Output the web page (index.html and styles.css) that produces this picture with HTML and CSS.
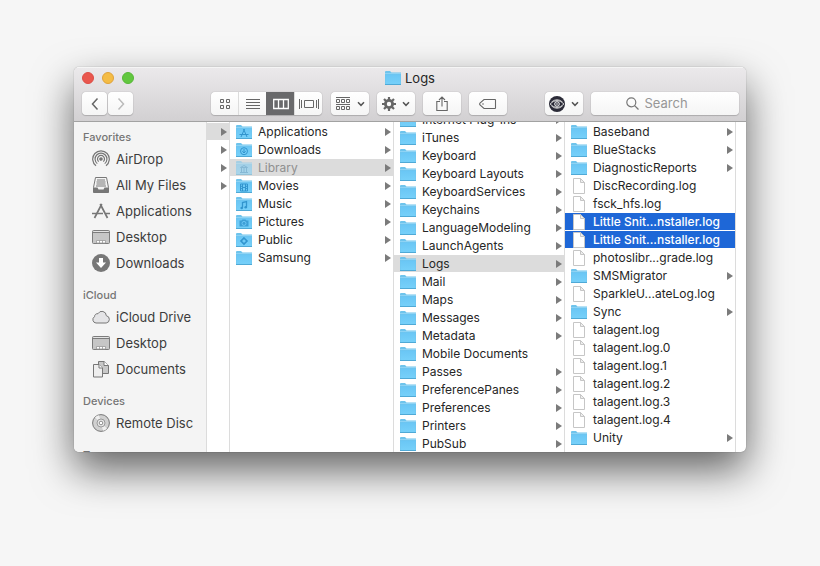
FILE: index.html
```html
<!DOCTYPE html>
<html lang="en">
<head>
<meta charset="utf-8">
<title>Logs</title>
<link rel="stylesheet" href="styles.css">
</head>
<body>
<svg class="defs" aria-hidden="true">
  <defs>
    <linearGradient id="blue" x1="0" y1="0" x2="0" y2="1"><stop offset="0" stop-color="#6ac6f5"/><stop offset="1" stop-color="#76d0f9"/></linearGradient>
    <symbol id="folder" viewBox="0 0 16 14">
      <path d="M0 1Q0 0 1 0H5L6.500 1.500H16V14H0Z" fill="#6fc4ec"/>
      <path d="M0 2.500H16" stroke="#8fd3f4"/>
      <path d="M.5 3.500H15.500V13H.5Z" fill="url(#blue)"/>
      <path d="M0 13.500H16" stroke="#4fa9d6"/>
    </symbol>
    <symbol id="file" viewBox="0 0 14 16">
      <path d="M1.500.5H8.500L12.500 4.500V15.500H1.500Z" fill="#fff" stroke="#c6c6c6"/>
      <path d="M8.500.5V4.500H12.500Z" fill="#eee" stroke="#c6c6c6"/>
    </symbol>
    <symbol id="chev" viewBox="0 0 8 6"><path d="M1 1.200L4 4.300L7 1.200" fill="none" stroke="#555" stroke-width="1.500"/></symbol>
    <symbol id="desktop" viewBox="0 0 18 18">
      <rect x=".5" y="2.500" width="17" height="13" rx="1" fill="#c6c6c6" stroke="#7c7c7c"/>
      <path d="M1 4.500H17" stroke="#7c7c7c"/><path d="M1.500 3.500H16.500" stroke="#e4e4e4"/>
      <path d="M4.500 15V12.500H13.500V15Z" fill="#fff" stroke="#999" stroke-width=".8"/><path d="M7.500 12.500V15M10.500 12.500V15" stroke="#999" stroke-width=".8"/>
    </symbol>
  </defs>
</svg>
<main class="window">
  <header class="titlebar">
    <div class="caption">
      <div class="lights">
        <button class="light close" aria-label="Close"></button>
        <button class="light minimize" aria-label="Minimize"></button>
        <button class="light zoom" aria-label="Zoom"></button>
      </div>
      <h1 class="title"><svg class="folder"><use href="#folder"/></svg>Logs</h1>
    </div>
    <div class="toolbar">
      <div class="history">
        <button class="tool nav" aria-label="Back"><svg width="8" height="14" viewBox="0 0 8 14"><path d="M6.500 1.500L1.500 7L6.500 12.500" fill="none" stroke="#666" stroke-width="1.500"/></svg></button>
        <button class="tool nav" aria-label="Forward" disabled><svg width="8" height="14" viewBox="0 0 8 14"><path d="M1.500 1.500L6.500 7L1.500 12.500" fill="none" stroke="#bbb" stroke-width="1.500"/></svg></button>
      </div>
      <div class="views">
        <button class="view" aria-label="Icons"><svg width="12" height="12" viewBox="0 0 12 12" fill="none" stroke="#666"><path d="M1.500 1.500h3v3h-3zM7.500 1.500h3v3h-3zM1.500 7.500h3v3h-3zM7.500 7.500h3v3h-3z"/></svg></button>
        <button class="view" aria-label="List"><svg width="14" height="12" viewBox="0 0 14 12"><path d="M0 1.500H14M0 4.500H14M0 7.500H14M0 10.500H14" stroke="#666"/></svg></button>
        <button class="view selected" aria-label="Columns" aria-pressed="true"><svg width="16" height="12" viewBox="0 0 16 12"><path d="M.7 1.500H15.300V10.500H.7ZM5.500 1.500V10.500M10.500 1.500V10.500" fill="none" stroke="#fff" stroke-width="1.300"/></svg></button>
        <button class="view" aria-label="Cover Flow"><svg width="20" height="12" viewBox="0 0 20 12"><path d="M.5 1V11M2.500 2V10M17.500 2V10M19.500 1V11M5.500 2.500H14.500V9.500H5.500Z" fill="none" stroke="#666"/></svg></button>
      </div>
      <div class="actions">
        <button class="tool" aria-label="Arrange"><svg width="15" height="14" viewBox="0 0 15 14" fill="none" stroke="#666"><path d="M0 .5H14M0 7.500H14M.5 2.500h3v3h-3zM5.500 2.500h3v3h-3zM10.500 2.500h3v3h-3zM.5 9.500h3v3h-3zM5.500 9.500h3v3h-3zM10.500 9.500h3v3h-3z"/></svg><svg class="chev"><use href="#chev"/></svg></button>
        <button class="tool" aria-label="Action"><svg width="14" height="14" viewBox="-7 -7 14 14"><circle r="3.600" fill="none" stroke="#666" stroke-width="2.800"/><path d="M0-7V-4M0 4V7M-7 0H-4M4 0H7M-5-5L-3-3M3 3L5 5M-5 5L-3 3M3-3L5-5" stroke="#666" stroke-width="2.200"/></svg><svg class="chev"><use href="#chev"/></svg></button>
        <button class="tool" aria-label="Share"><svg width="12" height="16" viewBox="0 0 12 16"><path d="M4 5.500H.8V14.500H11.200V5.500H8M6 10.500V1M3 4L6 1L9 4" fill="none" stroke="#666" stroke-width="1.100"/></svg></button>
        <button class="tool" aria-label="Tags"><svg width="18" height="12" viewBox="0 0 18 12"><path d="M5 1.500H16Q16.500 1.500 16.500 2V10Q16.500 10.500 16 10.500H5L1 7Q.3 6 1 5Z" fill="none" stroke="#666" stroke-width="1.100"/><circle cx="4" cy="6" r=".8" fill="#666"/></svg></button>
      </div>
      <button class="tool eye" aria-label="Quick actions"><svg width="16" height="16" viewBox="0 0 16 16"><circle cx="8" cy="8" r="8" fill="#2b2b38"/><path d="M1 8Q8 1 15 8Q8 15 1 8ZM2.500 6Q8 1.500 13.500 6M2.500 10Q8 14.500 13.500 10" fill="none" stroke="#ddd" stroke-width=".9"/><circle cx="8" cy="8" r="2.300" fill="none" stroke="#fff"/><circle cx="8" cy="8" r=".8" fill="#fff"/></svg><svg class="chev"><use href="#chev"/></svg></button>
      <label class="search"><svg width="13" height="13" viewBox="0 0 13 13"><circle cx="5.300" cy="5.300" r="4.500" fill="none" stroke="#777" stroke-width="1.200"/><path d="M8.600 8.600L12.500 12.500" stroke="#777" stroke-width="1.300"/></svg><input type="text" placeholder="Search" aria-label="Search"></label>
    </div>
  </header>
  <div class="browser">
    <nav class="sidebar">
      <h2>Favorites</h2>
      <a href="#"><svg viewBox="0 0 18 18" fill="none" stroke="#777" stroke-width="1.200"><path d="M4 15.700A8.300 8.300 0 1 1 14 15.700M5.300 13.600A5.900 5.900 0 1 1 12.700 13.600M6.700 11.600A3.500 3.500 0 1 1 11.300 11.600"/><circle cx="9" cy="9" r="1.200" fill="#777"/></svg>AirDrop</a>
      <a href="#"><svg viewBox="0 0 18 18"><path d="M3.500 1.500H14.500L16.500 11.500V16.500H1.500V11.500Z" fill="#f4f4f4" stroke="#777"/><path d="M1.500 11.500H5.500L6.500 13.500H11.500L12.500 11.500H16.500V16.500H1.500Z" fill="#777"/><path d="M5 4H13M4.500 6H13.500M4.500 8H13.500M4 10H14" stroke="#777"/></svg>All My Files</a>
      <a href="#"><svg viewBox="0 0 18 18" fill="none" stroke="#777" stroke-width="1.700"><path d="M9.800 2L2.500 16M8.200 2L15.500 16"/><path d="M0 11.500H11M14 11.500H18" stroke-width="1.500"/></svg>Applications</a>
      <a href="#"><svg><use href="#desktop"/></svg>Desktop</a>
      <a href="#"><svg viewBox="0 0 18 18"><circle cx="9" cy="9" r="9" fill="#777"/><path d="M7 4H11V8.500H14L9 14L4 8.500H7Z" fill="#fff"/></svg>Downloads</a>
      <h2>iCloud</h2>
      <a href="#"><svg viewBox="0 0 18 18"><path d="M4 15A3.400 3.400 0 0 1 2.500 8.700A3 3 0 0 1 6 5.700A4.400 4.400 0 0 1 14.300 7.700A3.700 3.700 0 0 1 14.200 15Z" fill="#e4e4e6" stroke="#777"/></svg>iCloud Drive</a>
      <a href="#"><svg><use href="#desktop"/></svg>Desktop</a>
      <a href="#"><svg viewBox="0 0 18 18" stroke="#777"><path d="M6.500 1.500H12L16.500 5.500V13.500H6.500Z" fill="#c8c8c8"/><path d="M12 1.500V5.500H16.500" fill="#fff"/><path d="M1.500 4.500H7L10.500 8V17H1.500Z" fill="#eee"/><path d="M7 4.500V8H10.500" fill="#fff"/></svg>Documents</a>
      <h2>Devices</h2>
      <a href="#"><svg viewBox="0 0 18 18" fill="none"><circle cx="9" cy="9" r="8.400" fill="#d0d0d0" stroke="#777"/><path d="M9 9L3 3.500A8 8 0 0 1 7 1.300ZM9 9L15 14.500A8 8 0 0 1 11 16.700Z" fill="#f0f0f0"/><circle cx="9" cy="9" r="4" fill="#e8e8e8" stroke="#888" stroke-width=".8"/><circle cx="9" cy="9" r="1.800" fill="#fff" stroke="#777" stroke-width=".8"/></svg>Remote Disc</a>
      <h2>Tags</h2>
    </nav>
    <ul class="column parents">
      <li><button class="row more current" aria-label="Home"></button></li>
      <li><button class="row more" aria-label="Folder 2"></button></li>
      <li><button class="row more" aria-label="Folder 3"></button></li>
      <li><button class="row more" aria-label="Folder 4"></button></li>
    </ul>
    <ul class="column">
      <li><button class="row more"><svg class="folder" viewBox="0 0 16 14"><use href="#folder"/><path d="M8.500 4L5 12M7.500 4L11 12M3.500 9.500H12.500" fill="none" stroke="#3295ce"/></svg>Applications</button></li>
      <li><button class="row more"><svg class="folder" viewBox="0 0 16 14"><use href="#folder"/><circle cx="8" cy="8.200" r="3.500" fill="none" stroke="#3295ce"/><path d="M8 6V9.500M6.300 8.300L8 10L9.700 8.300" fill="none" stroke="#3295ce"/></svg>Downloads</button></li>
      <li><button class="row more current dimmed"><svg class="folder" viewBox="0 0 16 14"><use href="#folder"/><path d="M4.500 6.500L8 4.500L11.500 6.500ZM5.500 7V11M8 7V11M10.500 7V11M4 11.500H12" fill="none" stroke="#3295ce"/></svg>Library</button></li>
      <li><button class="row more"><svg class="folder" viewBox="0 0 16 14"><use href="#folder"/><path d="M4.500 5H11.500V12H4.500ZM6.500 5V12M9.500 5V12M4.500 7.300H6.500M4.500 9.600H6.500M9.500 7.300H11.500M9.500 9.600H11.500M6.500 8.500H9.500" fill="none" stroke="#3295ce"/></svg>Movies</button></li>
      <li><button class="row more"><svg class="folder" viewBox="0 0 16 14"><use href="#folder"/><path d="M6.500 11V5.500L10.500 4.500V10" fill="none" stroke="#3295ce" stroke-width="1.300"/><circle cx="5.700" cy="11" r="1.300" fill="#3295ce"/><circle cx="9.700" cy="10.200" r="1.300" fill="#3295ce"/></svg>Music</button></li>
      <li><button class="row more"><svg class="folder" viewBox="0 0 16 14"><use href="#folder"/><path d="M3.500 5.500H5.500L6.500 4.500H9.500L10.500 5.500H12.500V11.500H3.500Z" fill="#3d9fd6"/><circle cx="8" cy="8.400" r="2" fill="none" stroke="#70c8f5" stroke-width=".9"/></svg>Pictures</button></li>
      <li><button class="row more"><svg class="folder" viewBox="0 0 16 14"><use href="#folder"/><path d="M8 5L11 8L8 11L5 8Z" fill="none" stroke="#3295ce" stroke-width="1.600"/></svg>Public</button></li>
      <li><button class="row more"><svg class="folder"><use href="#folder"/></svg>Samsung</button></li>
    </ul>
    <ul class="column scrolled">
      <li><button class="row more"><svg class="folder"><use href="#folder"/></svg>Internet Plug-Ins</button></li>
      <li><button class="row more"><svg class="folder"><use href="#folder"/></svg>iTunes</button></li>
      <li><button class="row more"><svg class="folder"><use href="#folder"/></svg>Keyboard</button></li>
      <li><button class="row more"><svg class="folder"><use href="#folder"/></svg>Keyboard Layouts</button></li>
      <li><button class="row more"><svg class="folder"><use href="#folder"/></svg>KeyboardServices</button></li>
      <li><button class="row more"><svg class="folder"><use href="#folder"/></svg>Keychains</button></li>
      <li><button class="row more"><svg class="folder"><use href="#folder"/></svg>LanguageModeling</button></li>
      <li><button class="row more"><svg class="folder"><use href="#folder"/></svg>LaunchAgents</button></li>
      <li><button class="row more current"><svg class="folder"><use href="#folder"/></svg>Logs</button></li>
      <li><button class="row more"><svg class="folder"><use href="#folder"/></svg>Mail</button></li>
      <li><button class="row more"><svg class="folder"><use href="#folder"/></svg>Maps</button></li>
      <li><button class="row more"><svg class="folder"><use href="#folder"/></svg>Messages</button></li>
      <li><button class="row more"><svg class="folder"><use href="#folder"/></svg>Metadata</button></li>
      <li><button class="row"><svg class="folder"><use href="#folder"/></svg>Mobile Documents</button></li>
      <li><button class="row more"><svg class="folder"><use href="#folder"/></svg>Passes</button></li>
      <li><button class="row more"><svg class="folder"><use href="#folder"/></svg>PreferencePanes</button></li>
      <li><button class="row more"><svg class="folder"><use href="#folder"/></svg>Preferences</button></li>
      <li><button class="row more"><svg class="folder"><use href="#folder"/></svg>Printers</button></li>
      <li><button class="row more"><svg class="folder"><use href="#folder"/></svg>PubSub</button></li>
    </ul>
    <ul class="column">
      <li><button class="row more"><svg class="folder"><use href="#folder"/></svg>Baseband</button></li>
      <li><button class="row more"><svg class="folder"><use href="#folder"/></svg>BlueStacks</button></li>
      <li><button class="row more"><svg class="folder"><use href="#folder"/></svg>DiagnosticReports</button></li>
      <li><button class="row"><svg class="file"><use href="#file"/></svg>DiscRecording.log</button></li>
      <li><button class="row"><svg class="file"><use href="#file"/></svg>fsck_hfs.log</button></li>
      <li><button class="row picked"><svg class="file"><use href="#file"/></svg>Little Snit...nstaller.log</button></li>
      <li><button class="row picked"><svg class="file"><use href="#file"/></svg>Little Snit...nstaller.log</button></li>
      <li><button class="row"><svg class="file"><use href="#file"/></svg>photoslibr...grade.log</button></li>
      <li><button class="row more"><svg class="folder"><use href="#folder"/></svg>SMSMigrator</button></li>
      <li><button class="row"><svg class="file"><use href="#file"/></svg>SparkleU...ateLog.log</button></li>
      <li><button class="row more"><svg class="folder"><use href="#folder"/></svg>Sync</button></li>
      <li><button class="row"><svg class="file"><use href="#file"/></svg>talagent.log</button></li>
      <li><button class="row"><svg class="file"><use href="#file"/></svg>talagent.log.0</button></li>
      <li><button class="row"><svg class="file"><use href="#file"/></svg>talagent.log.1</button></li>
      <li><button class="row"><svg class="file"><use href="#file"/></svg>talagent.log.2</button></li>
      <li><button class="row"><svg class="file"><use href="#file"/></svg>talagent.log.3</button></li>
      <li><button class="row"><svg class="file"><use href="#file"/></svg>talagent.log.4</button></li>
      <li><button class="row more"><svg class="folder"><use href="#folder"/></svg>Unity</button></li>
    </ul>
  </div>
</main>
</body>
</html>
```
FILE: styles.css
```css
* { box-sizing: border-box; }
body {
  margin: 0;
  height: 100vh;
  padding: 67px 74px 114px;
  display: flex;
  background: #f6f6f6;
  color: #262626;
  font: 12px/17px Inter, "Liberation Sans", sans-serif;
}
button, input { font: inherit; color: inherit; }
button { border: 0; padding: 0; background: none; }
h1, h2, ul { margin: 0; padding: 0; font-weight: 400; }
ul { list-style: none; }
svg { display: block; flex: none; }
.defs { position: absolute; width: 0; height: 0; }
.window {
  flex: 1;
  min-width: 0;
  display: flex;
  flex-direction: column;
  overflow: hidden;
  border-radius: 5px;
  background: #fff;
  box-shadow: 0 0 1px rgba(0, 0, 0, .5), 0 18px 40px rgba(0, 0, 0, .6);
}
.titlebar {
  height: 55px;
  flex: none;
  background: linear-gradient(#ebe9eb, #d2d0d2);
  border-top: 1px solid #f5f5f5;
  border-bottom: 1px solid #a2a2a2;
}
.caption {
  height: 20px;
  margin-bottom: 4px;
  padding: 0 8px;
  display: grid;
  grid-template-columns: 1fr auto 1fr;
  align-items: center;
}
.lights { display: flex; gap: 8px; }
.light { width: 12px; height: 12px; border-radius: 50%; }
.close { background: #e9574e; border: 1px solid #dd4d46; }
.minimize { background: #f4bc45; border: 1px solid #dfa23a; }
.zoom { background: #62c73f; border: 1px solid #57b738; }
.title { display: flex; align-items: center; gap: 4px; font-size: 13px; }
.folder { width: 16px; height: 14px; }
.file { width: 14px; height: 16px; margin: 0 1px; }
.toolbar { display: flex; padding: 0 7px 0 8px; align-items: center; }
.history { display: flex; gap: 1px; margin-right: 78px; }
.tool, .views, .search {
  height: 23px;
  border-radius: 4px;
  background: linear-gradient(#fff, #f5f5f5);
  box-shadow: 0 0 1px rgba(0, 0, 0, .4), 0 1px 1px rgba(0, 0, 0, .15);
}
.tool { width: 38px; display: flex; align-items: center; justify-content: center; gap: 6px; }
.nav { width: 25px; }
.chev { width: 8px; height: 6px; }
.views { display: flex; width: 111px; margin-right: 9px; }
.view { flex: 1; display: flex; align-items: center; justify-content: center; }
.view + .view { border-left: 1px solid #dcdcdc; }
.view.selected { background: #69696b; border-color: #69696b; }
.actions { display: flex; gap: 8px; margin-right: auto; }
.eye { margin-right: 8px; }
.search { width: 148px; display: flex; align-items: center; justify-content: center; gap: 6px; }
.search input {
  width: 60px;
  border: 0;
  padding: 0;
  background: none;
  outline: none;
  font-size: 13px;
}
.search input::placeholder { color: #979797; opacity: 1; }
.browser {
  flex: 1;
  min-height: 0;
  display: grid;
  grid-template-columns: 133px 23px 164fr 171fr 171fr 10px;
}
.sidebar {
  overflow: hidden;
  background: #f4f4f4;
  border-right: 1px solid #dcdcdc;
  font-size: 13px;
}
.sidebar h2 {
  margin: 10px 0 0 9px;
  color: #757575;
  font-size: 11px;
  font-weight: 500;
  line-height: 18px;
}
.sidebar h2:first-child { margin-top: 6px; }
.sidebar a {
  height: 26px;
  padding-left: 18px;
  display: flex;
  align-items: center;
  gap: 6px;
  color: #3c3c3c;
  text-decoration: none;
  white-space: nowrap;
}
.sidebar svg { width: 18px; height: 18px; }
.column {
  min-width: 0;
  overflow: hidden;
  padding-top: 1px;
  border-right: 1px solid #dcdcdc;
}
.column li { height: 18px; }
.scrolled li:first-child { margin-top: -12px; }
.row {
  width: 100%;
  height: 17px;
  padding: 0 2px 0 6px;
  display: flex;
  align-items: center;
  gap: 6px;
  white-space: nowrap;
}
.more::after {
  content: "";
  margin-left: auto;
  border: solid transparent;
  border-width: 4px 0 4px 6px;
  border-left-color: #7b7b7b;
}
.current { background: #dcdcdc; }
.dimmed { color: #8f8f8f; }
.dimmed .folder { opacity: .5; }
.picked { background: #1e67d7; color: #fff; font-weight: 500; }
```
